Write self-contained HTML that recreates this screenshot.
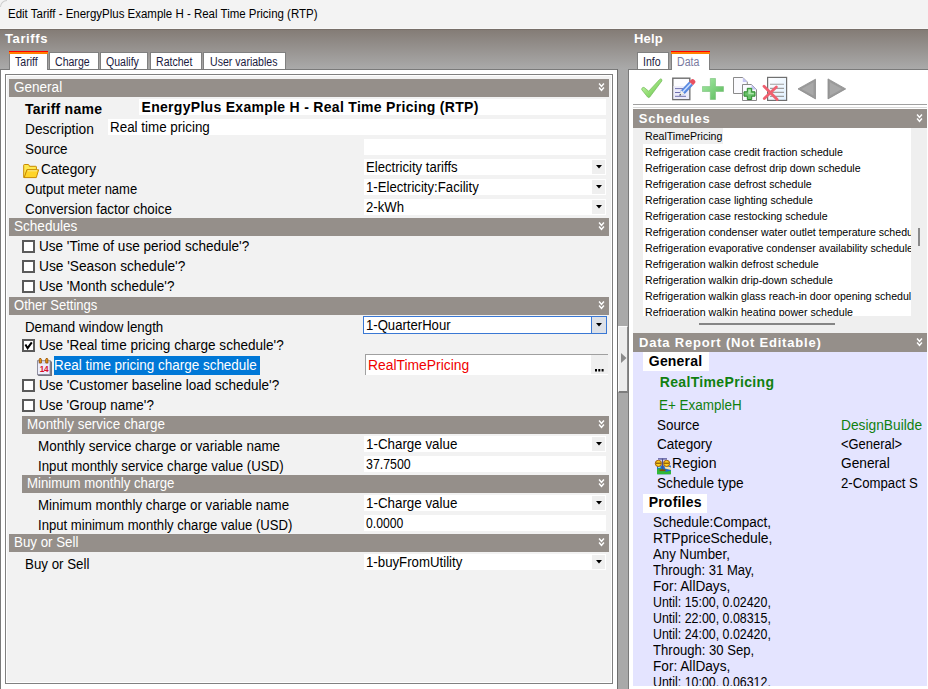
<!DOCTYPE html>
<html><head><meta charset="utf-8"><style>
html,body{margin:0;padding:0;}
body{width:928px;height:689px;overflow:hidden;position:relative;background:#fff;font-family:"Liberation Sans",sans-serif;}
.r{position:absolute;}
.t{position:absolute;white-space:nowrap;}
svg{display:block;}
</style></head><body>
<div class="r" style="left:0px;top:0px;width:928px;height:28px;background:#f3f3f3;"></div>
<div class="r" style="left:0;top:0;width:7px;height:7px;border-top-left-radius:8px;border-top:1px solid #cdcdcd;border-left:1px solid #cdcdcd;box-sizing:border-box"></div>
<div class="r" style="left:0px;top:28px;width:928px;height:1px;background:#f7f7f7;"></div>
<div class="t" style="left:7.5px;top:4px;line-height:20px;color:#000;font-size:12px;font-weight:normal;letter-spacing:0px;transform:scaleX(0.9570);transform-origin:0 0;">Edit Tariff - EnergyPlus Example H - Real Time Pricing (RTP)</div>
<div class="r" style="left:0px;top:29px;width:928px;height:1px;background:#776f69;"></div>
<div class="r" style="left:0px;top:30px;width:928px;height:39px;background:linear-gradient(#847c76,#aaaaaa);"></div>
<div class="t" style="left:5px;top:29px;line-height:20px;color:#fff;font-size:13px;font-weight:bold;letter-spacing:0.6px;">Tariffs</div>
<div class="t" style="left:634px;top:29px;line-height:20px;color:#fff;font-size:13px;font-weight:bold;letter-spacing:0.2px;">Help</div>
<div class="r" style="left:0px;top:69px;width:618px;height:620px;background:#fff;border-left:1px solid #7a7a7a;border-top:1px solid #7a7a7a;border-right:1px solid #7a7a7a;box-sizing:border-box"></div>
<div class="r" style="left:9px;top:51px;width:39px;height:19px;background:#fff;border-left:1px solid #808080;border-right:1px solid #808080;box-sizing:border-box"></div>
<div class="r" style="left:9px;top:51px;width:39px;height:1px;background:#ff0000;"></div>
<div class="r" style="left:9px;top:52px;width:39px;height:2px;background:#ff8000;"></div>
<div class="t" style="left:15px;top:52px;line-height:20px;color:#1a1a40;font-size:12px;font-weight:normal;letter-spacing:0px;transform:scaleX(0.8800);transform-origin:0 0;">Tariff</div>
<div class="r" style="left:49px;top:52px;width:50px;height:17px;background:#fff;border:1px solid #808080;border-bottom:none;box-sizing:border-box"></div>
<div class="t" style="left:55px;top:52px;line-height:20px;color:#1a1a40;font-size:12px;font-weight:normal;letter-spacing:0px;transform:scaleX(0.8800);transform-origin:0 0;">Charge</div>
<div class="r" style="left:100px;top:52px;width:48px;height:17px;background:#fff;border:1px solid #808080;border-bottom:none;box-sizing:border-box"></div>
<div class="t" style="left:105.5px;top:52px;line-height:20px;color:#1a1a40;font-size:12px;font-weight:normal;letter-spacing:0px;transform:scaleX(0.8800);transform-origin:0 0;">Qualify</div>
<div class="r" style="left:150px;top:52px;width:52px;height:17px;background:#fff;border:1px solid #808080;border-bottom:none;box-sizing:border-box"></div>
<div class="t" style="left:155.7px;top:52px;line-height:20px;color:#1a1a40;font-size:12px;font-weight:normal;letter-spacing:0px;transform:scaleX(0.8800);transform-origin:0 0;">Ratchet</div>
<div class="r" style="left:203px;top:52px;width:83px;height:17px;background:#fff;border:1px solid #808080;border-bottom:none;box-sizing:border-box"></div>
<div class="t" style="left:210px;top:52px;line-height:20px;color:#1a1a40;font-size:12px;font-weight:normal;letter-spacing:0px;transform:scaleX(0.8800);transform-origin:0 0;">User variables</div>
<div class="r" style="left:5px;top:74px;width:608px;height:610px;background:#f2f2f2;border:1px solid #808080;box-shadow:inset 1px 1px 0 #fff, inset -1px -1px 0 #fff;box-sizing:border-box"></div>
<div class="r" style="left:9px;top:79px;width:600px;height:18px;background:#958f8a;"></div>
<div class="t" style="left:14px;top:77px;line-height:20px;color:#fff;font-size:14px;font-weight:normal;letter-spacing:0px;transform:scaleX(0.9667);transform-origin:0 0;">General</div>
<div class="r" style="left:598px;top:83px;width:7px;height:9px"><svg width="7" height="9" viewBox="0 0 7 9"><path d="M1.1 0.6 L3.5 3.4 L5.9 0.6 M1.1 4.6 L3.5 7.4 L5.9 4.6" stroke="#fff" stroke-width="1.5" fill="none"/></svg></div>
<div class="t" style="left:25px;top:99px;line-height:20px;color:#000;font-size:14px;font-weight:bold;letter-spacing:0.25px;">Tariff name</div>
<div class="r" style="left:139px;top:99px;width:467px;height:16px;background:#fff;"></div>
<div class="t" style="left:141.5px;top:97px;line-height:20px;color:#000;font-size:14px;font-weight:bold;letter-spacing:0.3px;">EnergyPlus Example H - Real Time Pricing (RTP)</div>
<div class="t" style="left:25px;top:119px;line-height:20px;color:#000;font-size:14px;font-weight:normal;letter-spacing:0px;transform:scaleX(0.9824);transform-origin:0 0;">Description</div>
<div class="r" style="left:108px;top:119px;width:498px;height:16px;background:#fff;"></div>
<div class="t" style="left:110px;top:117px;line-height:20px;color:#000;font-size:14px;font-weight:normal;letter-spacing:0px;transform:scaleX(0.9573);transform-origin:0 0;">Real time pricing</div>
<div class="t" style="left:25px;top:139px;line-height:20px;color:#000;font-size:14px;font-weight:normal;letter-spacing:0px;transform:scaleX(0.9600);transform-origin:0 0;">Source</div>
<div class="r" style="left:364px;top:139px;width:242px;height:16px;background:#fff;"></div>
<div class="r" style="left:23px;top:164px;width:17px;height:15px"><svg width="17" height="15" viewBox="0 0 17 15"><path d="M0.7 13.5 V1.2 Q0.7 0.5 1.4 0.5 H5.2 Q5.8 0.5 6 1 L6.4 2.3 H12.8 Q13.4 2.3 13.4 2.9 V5.8 H3.9 L1.9 13.5 Z" fill="#ffe850" stroke="#c88a00" stroke-width="1"/><path d="M3.9 5.8 H15.6 L13.3 13.6 H1.2 Z" fill="#ffd428" stroke="#c88a00" stroke-width="1"/><path d="M4.6 6.8 H14.3" stroke="#fff8b0" stroke-width="0.8"/></svg></div>
<div class="t" style="left:41px;top:159px;line-height:20px;color:#000;font-size:14px;font-weight:normal;letter-spacing:0px;transform:scaleX(0.9696);transform-origin:0 0;">Category</div>
<div class="r" style="left:364px;top:159px;width:242px;height:16px;background:#fff;"></div>
<div class="r" style="left:592px;top:160px;width:13px;height:14px;background:#efefef;"></div>
<div class="r" style="left:596px;top:165px;width:6px;height:4px"><svg width="6" height="4" viewBox="0 0 6 4"><path d="M0 0 L6 0 L3 3.5 Z" fill="#000"/></svg></div>
<div class="t" style="left:366px;top:157px;line-height:20px;color:#000;font-size:14px;font-weight:normal;letter-spacing:0px;transform:scaleX(0.9375);transform-origin:0 0;">Electricity tariffs</div>
<div class="t" style="left:25px;top:179px;line-height:20px;color:#000;font-size:14px;font-weight:normal;letter-spacing:0px;transform:scaleX(0.9303);transform-origin:0 0;">Output meter name</div>
<div class="r" style="left:364px;top:179px;width:242px;height:16px;background:#fff;"></div>
<div class="r" style="left:592px;top:180px;width:13px;height:14px;background:#efefef;"></div>
<div class="r" style="left:596px;top:185px;width:6px;height:4px"><svg width="6" height="4" viewBox="0 0 6 4"><path d="M0 0 L6 0 L3 3.5 Z" fill="#000"/></svg></div>
<div class="t" style="left:366px;top:177px;line-height:20px;color:#000;font-size:14px;font-weight:normal;letter-spacing:0px;transform:scaleX(0.9412);transform-origin:0 0;">1-Electricity:Facility</div>
<div class="t" style="left:25px;top:199px;line-height:20px;color:#000;font-size:14px;font-weight:normal;letter-spacing:0px;transform:scaleX(0.9529);transform-origin:0 0;">Conversion factor choice</div>
<div class="r" style="left:364px;top:199px;width:242px;height:16px;background:#fff;"></div>
<div class="r" style="left:592px;top:200px;width:13px;height:14px;background:#efefef;"></div>
<div class="r" style="left:596px;top:205px;width:6px;height:4px"><svg width="6" height="4" viewBox="0 0 6 4"><path d="M0 0 L6 0 L3 3.5 Z" fill="#000"/></svg></div>
<div class="t" style="left:366px;top:197px;line-height:20px;color:#000;font-size:14px;font-weight:normal;letter-spacing:0px;transform:scaleX(0.9385);transform-origin:0 0;">2-kWh</div>
<div class="r" style="left:9px;top:218px;width:600px;height:18px;background:#958f8a;"></div>
<div class="t" style="left:14px;top:216px;line-height:20px;color:#fff;font-size:14px;font-weight:normal;letter-spacing:0px;transform:scaleX(0.9688);transform-origin:0 0;">Schedules</div>
<div class="r" style="left:598px;top:222px;width:7px;height:9px"><svg width="7" height="9" viewBox="0 0 7 9"><path d="M1.1 0.6 L3.5 3.4 L5.9 0.6 M1.1 4.6 L3.5 7.4 L5.9 4.6" stroke="#fff" stroke-width="1.5" fill="none"/></svg></div>
<div class="r" style="left:22px;top:240px;width:13px;height:13px;background:#fff;border:2px solid #5a5a5a;box-sizing:border-box"></div>
<div class="t" style="left:39px;top:236px;line-height:20px;color:#000;font-size:14px;font-weight:normal;letter-spacing:0px;transform:scaleX(0.9676);transform-origin:0 0;">Use 'Time of use period schedule'?</div>
<div class="r" style="left:22px;top:260px;width:13px;height:13px;background:#fff;border:2px solid #5a5a5a;box-sizing:border-box"></div>
<div class="t" style="left:39px;top:256px;line-height:20px;color:#000;font-size:14px;font-weight:normal;letter-spacing:0px;transform:scaleX(0.9797);transform-origin:0 0;">Use 'Season schedule'?</div>
<div class="r" style="left:22px;top:280px;width:13px;height:13px;background:#fff;border:2px solid #5a5a5a;box-sizing:border-box"></div>
<div class="t" style="left:39px;top:276px;line-height:20px;color:#000;font-size:14px;font-weight:normal;letter-spacing:0px;transform:scaleX(0.9619);transform-origin:0 0;">Use 'Month schedule'?</div>
<div class="r" style="left:9px;top:297px;width:600px;height:18px;background:#958f8a;"></div>
<div class="t" style="left:14px;top:295px;line-height:20px;color:#fff;font-size:14px;font-weight:normal;letter-spacing:0px;transform:scaleX(0.9318);transform-origin:0 0;">Other Settings</div>
<div class="r" style="left:598px;top:301px;width:7px;height:9px"><svg width="7" height="9" viewBox="0 0 7 9"><path d="M1.1 0.6 L3.5 3.4 L5.9 0.6 M1.1 4.6 L3.5 7.4 L5.9 4.6" stroke="#fff" stroke-width="1.5" fill="none"/></svg></div>
<div class="t" style="left:25px;top:317px;line-height:20px;color:#000;font-size:14px;font-weight:normal;letter-spacing:0px;transform:scaleX(0.9500);transform-origin:0 0;">Demand window length</div>
<div class="r" style="left:363px;top:316px;width:244px;height:18px;background:#fff;border:1px solid #3a78d4;box-sizing:border-box"></div>
<div class="r" style="left:591px;top:317px;width:15px;height:16px;background:#dde1e8;border-left:1px solid #3a78d4;box-sizing:border-box"></div>
<div class="r" style="left:596px;top:323px;width:6px;height:4px"><svg width="6" height="4" viewBox="0 0 6 4"><path d="M0 0 L6 0 L3 3.5 Z" fill="#000"/></svg></div>
<div class="t" style="left:366px;top:315px;line-height:20px;color:#000;font-size:14px;font-weight:normal;letter-spacing:0px;transform:scaleX(0.9371);transform-origin:0 0;">1-QuarterHour</div>
<div class="r" style="left:22px;top:339px;width:13px;height:13px;background:#fff;border:2px solid #5a5a5a;box-sizing:border-box"></div>
<div class="r" style="left:22px;top:339px;width:13px;height:13px"><svg width="13" height="13" viewBox="0 0 13 13"><path d="M3.4 5.6 L5.6 9.2 L9.8 3.3" stroke="#000" stroke-width="2" fill="none"/></svg></div>
<div class="t" style="left:39px;top:335px;line-height:20px;color:#000;font-size:14px;font-weight:normal;letter-spacing:0px;transform:scaleX(0.9681);transform-origin:0 0;">Use 'Real time pricing charge schedule'?</div>
<div class="r" style="left:36px;top:357px;width:17px;height:19px"><svg width="17" height="19" viewBox="0 0 17 19"><path d="M1 3.5 H14.5 L16 5 V19 H2.5 L1 17.5 Z" fill="#74747e"/><rect x="1.5" y="4" width="12.5" height="13.5" fill="#eeeefc" stroke="#8c8c9c" stroke-width="0.9"/><path d="M2 4.5 H13.5 V7 H2 Z" fill="#dcdcf0"/><path d="M3.3 6 Q2.6 1.5 4.2 1 Q5.8 0.8 5.4 6 Z" fill="#f09a18" stroke="#8a4800" stroke-width="0.8"/><path d="M9.8 6 Q9.1 1.5 10.7 1 Q12.3 0.8 11.9 6 Z" fill="#f09a18" stroke="#8a4800" stroke-width="0.8"/><text x="7.9" y="15.2" font-family="Liberation Sans" font-weight="bold" font-size="8.2" fill="#d8102a" text-anchor="middle" letter-spacing="-0.3">14</text></svg></div>
<div class="r" style="left:54px;top:356px;width:206px;height:19px;background:#0078d7;"></div>
<div class="t" style="left:54px;top:355px;line-height:20px;color:#fff;font-size:14px;font-weight:normal;letter-spacing:0px;transform:scaleX(0.9617);transform-origin:0 0;">Real time pricing charge schedule</div>
<div class="r" style="left:365px;top:354px;width:243px;height:21px;background:#fff;border-top:1px solid #a0a0a0;border-left:1px solid #a0a0a0;box-sizing:border-box"></div>
<div class="r" style="left:591px;top:355px;width:17px;height:19px;background:#efefef;"></div>
<div class="r" style="left:595px;top:369px;width:9px;height:3px"><svg width="9" height="3"><rect x="0" y="0" width="2" height="2.5" fill="#000"/><rect x="3.3" y="0" width="2" height="2.5" fill="#000"/><rect x="6.6" y="0" width="2" height="2.5" fill="#000"/></svg></div>
<div class="t" style="left:368px;top:355px;line-height:20px;color:#f00000;font-size:14px;font-weight:normal;letter-spacing:0px;transform:scaleX(0.9901);transform-origin:0 0;">RealTimePricing</div>
<div class="r" style="left:22px;top:379px;width:13px;height:13px;background:#fff;border:2px solid #5a5a5a;box-sizing:border-box"></div>
<div class="t" style="left:39px;top:375px;line-height:20px;color:#000;font-size:14px;font-weight:normal;letter-spacing:0px;transform:scaleX(0.9649);transform-origin:0 0;">Use 'Customer baseline load schedule'?</div>
<div class="r" style="left:22px;top:399px;width:13px;height:13px;background:#fff;border:2px solid #5a5a5a;box-sizing:border-box"></div>
<div class="t" style="left:39px;top:395px;line-height:20px;color:#000;font-size:14px;font-weight:normal;letter-spacing:0px;transform:scaleX(0.9593);transform-origin:0 0;">Use 'Group name'?</div>
<div class="r" style="left:22px;top:416px;width:587px;height:18px;background:#958f8a;"></div>
<div class="t" style="left:27px;top:414px;line-height:20px;color:#fff;font-size:14px;font-weight:normal;letter-spacing:0px;transform:scaleX(0.9580);transform-origin:0 0;">Monthly service charge</div>
<div class="r" style="left:598px;top:420px;width:7px;height:9px"><svg width="7" height="9" viewBox="0 0 7 9"><path d="M1.1 0.6 L3.5 3.4 L5.9 0.6 M1.1 4.6 L3.5 7.4 L5.9 4.6" stroke="#fff" stroke-width="1.5" fill="none"/></svg></div>
<div class="t" style="left:38px;top:436px;line-height:20px;color:#000;font-size:14px;font-weight:normal;letter-spacing:0px;transform:scaleX(0.9602);transform-origin:0 0;">Monthly service charge or variable name</div>
<div class="r" style="left:364px;top:436px;width:242px;height:16px;background:#fff;"></div>
<div class="r" style="left:592px;top:437px;width:13px;height:14px;background:#efefef;"></div>
<div class="r" style="left:596px;top:442px;width:6px;height:4px"><svg width="6" height="4" viewBox="0 0 6 4"><path d="M0 0 L6 0 L3 3.5 Z" fill="#000"/></svg></div>
<div class="t" style="left:366px;top:434px;line-height:20px;color:#000;font-size:14px;font-weight:normal;letter-spacing:0px;transform:scaleX(0.9543);transform-origin:0 0;">1-Charge value</div>
<div class="t" style="left:38px;top:456px;line-height:20px;color:#000;font-size:14px;font-weight:normal;letter-spacing:0px;transform:scaleX(0.9479);transform-origin:0 0;">Input monthly service charge value (USD)</div>
<div class="r" style="left:364px;top:456px;width:242px;height:16px;background:#fff;"></div>
<div class="t" style="left:366px;top:454px;line-height:20px;color:#000;font-size:14px;font-weight:normal;letter-spacing:0px;transform:scaleX(0.8837);transform-origin:0 0;">37.7500</div>
<div class="r" style="left:22px;top:475px;width:587px;height:18px;background:#958f8a;"></div>
<div class="t" style="left:27px;top:473px;line-height:20px;color:#fff;font-size:14px;font-weight:normal;letter-spacing:0px;transform:scaleX(0.9419);transform-origin:0 0;">Minimum monthly charge</div>
<div class="r" style="left:598px;top:479px;width:7px;height:9px"><svg width="7" height="9" viewBox="0 0 7 9"><path d="M1.1 0.6 L3.5 3.4 L5.9 0.6 M1.1 4.6 L3.5 7.4 L5.9 4.6" stroke="#fff" stroke-width="1.5" fill="none"/></svg></div>
<div class="t" style="left:38px;top:495px;line-height:20px;color:#000;font-size:14px;font-weight:normal;letter-spacing:0px;transform:scaleX(0.9490);transform-origin:0 0;">Minimum monthly charge or variable name</div>
<div class="r" style="left:364px;top:495px;width:242px;height:16px;background:#fff;"></div>
<div class="r" style="left:592px;top:496px;width:13px;height:14px;background:#efefef;"></div>
<div class="r" style="left:596px;top:501px;width:6px;height:4px"><svg width="6" height="4" viewBox="0 0 6 4"><path d="M0 0 L6 0 L3 3.5 Z" fill="#000"/></svg></div>
<div class="t" style="left:366px;top:493px;line-height:20px;color:#000;font-size:14px;font-weight:normal;letter-spacing:0px;transform:scaleX(0.9543);transform-origin:0 0;">1-Charge value</div>
<div class="t" style="left:38px;top:515px;line-height:20px;color:#000;font-size:14px;font-weight:normal;letter-spacing:0px;transform:scaleX(0.9370);transform-origin:0 0;">Input minimum monthly charge value (USD)</div>
<div class="r" style="left:364px;top:515px;width:242px;height:16px;background:#fff;"></div>
<div class="t" style="left:366px;top:513px;line-height:20px;color:#000;font-size:14px;font-weight:normal;letter-spacing:0px;transform:scaleX(0.8714);transform-origin:0 0;">0.0000</div>
<div class="r" style="left:9px;top:534px;width:600px;height:18px;background:#958f8a;"></div>
<div class="t" style="left:14px;top:532px;line-height:20px;color:#fff;font-size:14px;font-weight:normal;letter-spacing:0px;transform:scaleX(0.9515);transform-origin:0 0;">Buy or Sell</div>
<div class="r" style="left:598px;top:538px;width:7px;height:9px"><svg width="7" height="9" viewBox="0 0 7 9"><path d="M1.1 0.6 L3.5 3.4 L5.9 0.6 M1.1 4.6 L3.5 7.4 L5.9 4.6" stroke="#fff" stroke-width="1.5" fill="none"/></svg></div>
<div class="t" style="left:25px;top:554px;line-height:20px;color:#000;font-size:14px;font-weight:normal;letter-spacing:0px;transform:scaleX(0.9515);transform-origin:0 0;">Buy or Sell</div>
<div class="r" style="left:364px;top:554px;width:242px;height:16px;background:#fff;"></div>
<div class="r" style="left:592px;top:555px;width:13px;height:14px;background:#efefef;"></div>
<div class="r" style="left:596px;top:560px;width:6px;height:4px"><svg width="6" height="4" viewBox="0 0 6 4"><path d="M0 0 L6 0 L3 3.5 Z" fill="#000"/></svg></div>
<div class="t" style="left:366px;top:552px;line-height:20px;color:#000;font-size:14px;font-weight:normal;letter-spacing:0px;transform:scaleX(0.9455);transform-origin:0 0;">1-buyFromUtility</div>
<div class="r" style="left:617px;top:69px;width:1px;height:620px;background:#6e6e6e;"></div>
<div class="r" style="left:618px;top:69px;width:10px;height:620px;background:#a9a9a9;"></div>
<div class="r" style="left:618px;top:326px;width:10px;height:67px;background:#ececec;border-top:1px solid #fafafa;border-left:1px solid #fafafa;border-bottom:2px solid #7c7c7c;border-right:1px solid #8a8a8a;box-sizing:border-box"></div>
<div class="r" style="left:621px;top:353px;width:6px;height:10px"><svg width="6" height="10"><path d="M0 0 L5.5 5 L0 10 Z" fill="#8a8a8a"/></svg></div>
<div class="r" style="left:628px;top:69px;width:300px;height:620px;background:#fff;border-left:1px solid #7a7a7a;border-top:1px solid #7a7a7a;box-sizing:border-box"></div>
<div class="r" style="left:637px;top:52px;width:32px;height:17px;background:#fff;border:1px solid #808080;border-bottom:none;box-sizing:border-box"></div>
<div class="t" style="left:643px;top:52px;line-height:20px;color:#1a1a40;font-size:12px;font-weight:normal;letter-spacing:0px;transform:scaleX(0.8800);transform-origin:0 0;">Info</div>
<div class="r" style="left:671px;top:51px;width:39px;height:19px;background:#fff;border-left:1px solid #808080;border-right:1px solid #808080;box-sizing:border-box"></div>
<div class="r" style="left:671px;top:51px;width:39px;height:1px;background:#ff0000;"></div>
<div class="r" style="left:671px;top:52px;width:39px;height:2px;background:#ff8000;"></div>
<div class="t" style="left:677px;top:52px;line-height:20px;color:#7a7aa0;font-size:12px;font-weight:normal;letter-spacing:0px;transform:scaleX(0.8800);transform-origin:0 0;">Data</div>
<div class="r" style="left:640px;top:77px;width:24px;height:22px"><svg width="24" height="22" viewBox="0 0 24 22">
    <defs><linearGradient id="gck" x1="0" y1="0" x2="1" y2="1"><stop offset="0" stop-color="#d0fcb8"/><stop offset="0.5" stop-color="#98e078"/><stop offset="1" stop-color="#5cb848"/></linearGradient></defs>
    <path d="M2 11.2 Q1.2 12 2 13 L7.6 20 Q8.7 21.2 9.8 20 L21.8 4 Q22.5 2.6 21.2 2 Q20.2 1.6 19.5 2.6 L8.7 14.2 L4.3 10.6 Q3.1 9.8 2 11.2 Z" fill="url(#gck)" stroke="#70b858" stroke-width="0.7"/></svg></div>
<div class="r" style="left:672px;top:77px;width:24px;height:24px"><svg width="24" height="24" viewBox="0 0 24 24">
    <rect x="0.8" y="1.2" width="17" height="21.4" fill="#fcfcff" stroke="#6e6e6e" stroke-width="1.4"/>
    <rect x="1.5" y="9" width="15.6" height="13" fill="#ececfa"/>
    <path d="M3 11.6 H14 M3 15.5 H14 M3 19.3 H14" stroke="#7070b0" stroke-width="1"/>
    <g transform="translate(7.4,18.7) rotate(-46.3)">
    <path d="M0 0 L5 -2.6 H17 V2.6 H5 Z" fill="#5888e0"/>
    <path d="M5 -1 H17 V0.6 H5 Z" fill="#c8dcff"/>
    <path d="M0 0 L5 -2.6 V2.6 Z" fill="#f4f0e8"/>
    <path d="M0 0 L1.8 -0.9 V0.9 Z" fill="#303030"/>
    <path d="M17 -2.6 H19.6 Q21.8 -2.6 21.8 0 Q21.8 2.6 19.6 2.6 H17 Z" fill="#e85060"/>
    </g></svg></div>
<div class="r" style="left:702px;top:78px;width:22px;height:22px"><svg width="22" height="22" viewBox="0 0 22 22">
    <defs><linearGradient id="gpl" x1="0" y1="0" x2="1" y2="1"><stop offset="0" stop-color="#a8eca8"/><stop offset="1" stop-color="#58b858"/></linearGradient></defs>
    <path d="M8.3 0.5 H13.5 V8.6 H21.5 V13.5 H13.5 V21.5 H8.3 V13.5 H0.3 V8.6 H8.3 Z" fill="url(#gpl)" stroke="#78c078" stroke-width="0.6"/></svg></div>
<div class="r" style="left:732px;top:76px;width:26px;height:26px"><svg width="26" height="26" viewBox="0 0 26 26">
    <path d="M1.5 1.5 H10.8 L15.3 6 V17.5 H1.5 Z" fill="#fafafe" stroke="#8a8a8a"/><path d="M10.8 1.5 L15.3 6 H10.8 Z" fill="#c4c4f4"/>
    <path d="M10.5 8.5 H19.5 L24.5 13.5 V24.5 H10.5 Z" fill="#fafafe" stroke="#8a8a8a"/><path d="M19.5 8.5 L24.5 13.5 H19.5 Z" fill="#c4c4f4"/>
    <path d="M15.3 12.3 H19.7 V15.8 H23 V20.2 H19.7 V23.5 H15.3 V20.2 H12 V15.8 H15.3 Z" fill="#68c068" stroke="#2a8a2a" stroke-width="1"/>
    <path d="M16.3 13.5 H18.7 V17 H21.8 V18.3 H16.3 Z" fill="#b0e8b0"/></svg></div>
<div class="r" style="left:762px;top:76px;width:26px;height:26px"><svg width="26" height="26" viewBox="0 0 26 26">
    <defs><linearGradient id="gdl" x1="0" y1="0" x2="1" y2="1"><stop offset="0" stop-color="#ffffff"/><stop offset="1" stop-color="#e0f0ff"/></linearGradient></defs>
    <rect x="5.6" y="1.4" width="19" height="23" fill="url(#gdl)" stroke="#707070" stroke-width="1.2"/>
    <path d="M8 8.3 H22 M8 12.4 H22 M8 16.4 H22 M8 20.4 H22" stroke="#a0a0a0" stroke-width="1.1"/>
    <path d="M2 10.2 L15.2 23.6 M14.4 11 L2.3 22.6" stroke="#f06070" stroke-width="2.8" stroke-linecap="round"/></svg></div>
<div class="r" style="left:797px;top:78px;width:20px;height:22px"><svg width="20" height="22" viewBox="0 0 20 22">
    <path d="M1 10.9 L18.5 1.2 V20.9 Z" fill="#9a9a9a" stroke="#8c8c8c" stroke-width="0.8" stroke-linejoin="round"/><path d="M4.5 10.9 L16.5 4.2 V17.6 Z" fill="#a8a8a8"/></svg></div>
<div class="r" style="left:827px;top:78px;width:20px;height:22px"><svg width="20" height="22" viewBox="0 0 20 22">
    <path d="M1 0.9 L18.7 10.9 L1 20.9 Z" fill="#9a9a9a" stroke="#8c8c8c" stroke-width="0.8" stroke-linejoin="round"/><path d="M3 4.2 L15 10.9 L3 17.6 Z" fill="#a8a8a8"/></svg></div>
<div class="r" style="left:633px;top:104px;width:294px;height:1px;background:#a0a0a0;"></div>
<div class="r" style="left:633px;top:107px;width:294px;height:1px;background:#d8d8d8;"></div>
<div class="r" style="left:633px;top:109px;width:294px;height:19px;background:#958f8a;"></div>
<div class="t" style="left:638.8px;top:109px;line-height:20px;color:#fff;font-size:13px;font-weight:bold;letter-spacing:0.75px;">Schedules</div>
<div class="r" style="left:916px;top:114px;width:7px;height:9px"><svg width="7" height="9" viewBox="0 0 7 9"><path d="M1.1 0.6 L3.5 3.4 L5.9 0.6 M1.1 4.6 L3.5 7.4 L5.9 4.6" stroke="#fff" stroke-width="1.5" fill="none"/></svg></div>
<div class="r" style="left:633px;top:128px;width:294px;height:205px;background:#efefef;"></div>
<div class="r" style="left:643px;top:128px;width:268px;height:188px;background:#fff;"></div>
<div class="r" style="left:643px;top:128px;width:80px;height:16px;background:#f0f0f0;"></div>
<div class="r" style="left:643px;top:128px;width:268px;height:188px;overflow:hidden">
<div class="t" style="left:2px;top:-2px;line-height:20px;color:#000;font-size:10.6px;font-weight:normal;letter-spacing:0px;">RealTimePricing</div>
<div class="t" style="left:2px;top:14px;line-height:20px;color:#000;font-size:10.6px;font-weight:normal;letter-spacing:0px;">Refrigeration case credit fraction schedule</div>
<div class="t" style="left:2px;top:30px;line-height:20px;color:#000;font-size:10.6px;font-weight:normal;letter-spacing:0px;">Refrigeration case defrost drip down schedule</div>
<div class="t" style="left:2px;top:46px;line-height:20px;color:#000;font-size:10.6px;font-weight:normal;letter-spacing:0px;">Refrigeration case defrost schedule</div>
<div class="t" style="left:2px;top:62px;line-height:20px;color:#000;font-size:10.6px;font-weight:normal;letter-spacing:0px;">Refrigeration case lighting schedule</div>
<div class="t" style="left:2px;top:78px;line-height:20px;color:#000;font-size:10.6px;font-weight:normal;letter-spacing:0px;">Refrigeration case restocking schedule</div>
<div class="t" style="left:2px;top:94px;line-height:20px;color:#000;font-size:10.6px;font-weight:normal;letter-spacing:0px;">Refrigeration condenser water outlet temperature schedule</div>
<div class="t" style="left:2px;top:110px;line-height:20px;color:#000;font-size:10.6px;font-weight:normal;letter-spacing:0px;">Refrigeration evaporative condenser availability schedule</div>
<div class="t" style="left:2px;top:126px;line-height:20px;color:#000;font-size:10.6px;font-weight:normal;letter-spacing:0px;">Refrigeration walkin defrost schedule</div>
<div class="t" style="left:2px;top:142px;line-height:20px;color:#000;font-size:10.6px;font-weight:normal;letter-spacing:0px;">Refrigeration walkin drip-down schedule</div>
<div class="t" style="left:2px;top:158px;line-height:20px;color:#000;font-size:10.6px;font-weight:normal;letter-spacing:0px;">Refrigeration walkin glass reach-in door opening schedule</div>
<div class="t" style="left:2px;top:174px;line-height:20px;color:#000;font-size:10.6px;font-weight:normal;letter-spacing:0px;">Refrigeration walkin heating power schedule</div>
</div>
<div class="r" style="left:918px;top:228px;width:2px;height:18px;background:#8a8a8a;"></div>
<div class="r" style="left:699px;top:323px;width:136px;height:2px;background:#858585;"></div>
<div class="r" style="left:633px;top:333px;width:294px;height:19px;background:#958f8a;"></div>
<div class="t" style="left:639px;top:333px;line-height:20px;color:#fff;font-size:13px;font-weight:bold;letter-spacing:0.8px;">Data Report (Not Editable)</div>
<div class="r" style="left:916px;top:338px;width:7px;height:9px"><svg width="7" height="9" viewBox="0 0 7 9"><path d="M1.1 0.6 L3.5 3.4 L5.9 0.6 M1.1 4.6 L3.5 7.4 L5.9 4.6" stroke="#fff" stroke-width="1.5" fill="none"/></svg></div>
<div class="r" style="left:633px;top:352px;width:294px;height:334px;background:#e4e4ff;"></div>
<div class="r" style="left:643px;top:352px;width:66px;height:19px;background:#fff;"></div>
<div class="t" style="left:648.8px;top:351px;line-height:20px;color:#000;font-size:14px;font-weight:bold;letter-spacing:0.2px;">General</div>
<div class="t" style="left:659.7px;top:372px;line-height:20px;color:#108010;font-size:14px;font-weight:bold;letter-spacing:0.35px;">RealTimePricing</div>
<div class="t" style="left:659px;top:395px;line-height:20px;color:#108010;font-size:14px;font-weight:normal;letter-spacing:0px;transform:scaleX(0.9619);transform-origin:0 0;">E+ ExampleH</div>
<div class="t" style="left:657px;top:415px;line-height:20px;color:#000;font-size:14px;font-weight:normal;letter-spacing:0px;transform:scaleX(0.9581);transform-origin:0 0;">Source</div>
<div class="t" style="left:841px;top:415px;line-height:20px;color:#108010;font-size:14px;font-weight:normal;letter-spacing:0px;transform:scaleX(0.9827);transform-origin:0 0;">DesignBuilde</div>
<div class="t" style="left:657px;top:434px;line-height:20px;color:#000;font-size:14px;font-weight:normal;letter-spacing:0px;transform:scaleX(0.9696);transform-origin:0 0;">Category</div>
<div class="t" style="left:841px;top:434px;line-height:20px;color:#000;font-size:14px;font-weight:normal;letter-spacing:0px;transform:scaleX(0.9231);transform-origin:0 0;">&lt;General&gt;</div>
<div class="t" style="left:672px;top:453px;line-height:20px;color:#000;font-size:14px;font-weight:normal;letter-spacing:0px;transform:scaleX(1.0023);transform-origin:0 0;">Region</div>
<div class="t" style="left:841px;top:453px;line-height:20px;color:#000;font-size:14px;font-weight:normal;letter-spacing:0px;transform:scaleX(0.9792);transform-origin:0 0;">General</div>
<div class="t" style="left:657px;top:473px;line-height:20px;color:#000;font-size:14px;font-weight:normal;letter-spacing:0px;transform:scaleX(0.9770);transform-origin:0 0;">Schedule type</div>
<div class="t" style="left:841px;top:473px;line-height:20px;color:#000;font-size:14px;font-weight:normal;letter-spacing:0px;transform:scaleX(0.9412);transform-origin:0 0;">2-Compact S</div>
<div class="r" style="left:654px;top:457px;width:18px;height:18px"><svg width="18" height="18" viewBox="0 0 18 18"><rect x="3" y="8.5" width="14" height="8.8" rx="0.8" fill="#1a6ed0"/><path d="M3 12.5 Q6 10 8.5 13 Q11 16 17 13.5 V17.3 H3 Z" fill="#30b838"/><path d="M10.5 9 Q14 8.6 17 10.5 V13 Q14 12 11 11.5 Z" fill="#f4e0b0"/><path d="M4 9.5 Q5.5 8.8 7 9.8 L6 11 Q5 10.5 4 11 Z" fill="#a0e8ff"/><path d="M4 1.9 H13" stroke="#5a5aa0" stroke-width="1.4"/><path d="M8.5 1.5 V12.5" stroke="#50508a" stroke-width="1.3"/><circle cx="4.4" cy="6.4" r="3.1" fill="#ffd020" stroke="#9a5000" stroke-width="0.9"/><circle cx="12.6" cy="6.4" r="3.1" fill="#ffd020" stroke="#9a5000" stroke-width="0.9"/><path d="M1.8 6.2 H7 M10 6.2 H15.2" stroke="#6a3a00" stroke-width="1"/><path d="M5.5 13.2 H11.5" stroke="#8a5000" stroke-width="1.8"/></svg></div>
<div class="r" style="left:643px;top:494px;width:64px;height:19px;background:#fff;"></div>
<div class="t" style="left:648.7px;top:492px;line-height:20px;color:#000;font-size:14px;font-weight:bold;letter-spacing:0.2px;">Profiles</div>
<div class="r" style="left:633px;top:352px;width:294px;height:334px;overflow:hidden">
<div class="t" style="left:20px;top:160px;line-height:20px;color:#000;font-size:14px;font-weight:normal;letter-spacing:0px;transform:scaleX(0.9667);transform-origin:0 0;">Schedule:Compact,</div>
<div class="t" style="left:20px;top:176px;line-height:20px;color:#000;font-size:14px;font-weight:normal;letter-spacing:0px;transform:scaleX(0.9915);transform-origin:0 0;">RTPpriceSchedule,</div>
<div class="t" style="left:20px;top:192px;line-height:20px;color:#000;font-size:14px;font-weight:normal;letter-spacing:0px;transform:scaleX(0.9500);transform-origin:0 0;">Any Number,</div>
<div class="t" style="left:20px;top:208px;line-height:20px;color:#000;font-size:14px;font-weight:normal;letter-spacing:0px;transform:scaleX(0.9315);transform-origin:0 0;">Through: 31 May,</div>
<div class="t" style="left:20px;top:224px;line-height:20px;color:#000;font-size:14px;font-weight:normal;letter-spacing:0px;transform:scaleX(0.9740);transform-origin:0 0;">For: AllDays,</div>
<div class="t" style="left:20px;top:240px;line-height:20px;color:#000;font-size:14px;font-weight:normal;letter-spacing:0px;transform:scaleX(0.8855);transform-origin:0 0;">Until: 15:00, 0.02420,</div>
<div class="t" style="left:20px;top:256px;line-height:20px;color:#000;font-size:14px;font-weight:normal;letter-spacing:0px;transform:scaleX(0.8855);transform-origin:0 0;">Until: 22:00, 0.08315,</div>
<div class="t" style="left:20px;top:272px;line-height:20px;color:#000;font-size:14px;font-weight:normal;letter-spacing:0px;transform:scaleX(0.8855);transform-origin:0 0;">Until: 24:00, 0.02420,</div>
<div class="t" style="left:20px;top:288px;line-height:20px;color:#000;font-size:14px;font-weight:normal;letter-spacing:0px;transform:scaleX(0.9346);transform-origin:0 0;">Through: 30 Sep,</div>
<div class="t" style="left:20px;top:304px;line-height:20px;color:#000;font-size:14px;font-weight:normal;letter-spacing:0px;transform:scaleX(0.9740);transform-origin:0 0;">For: AllDays,</div>
<div class="t" style="left:20px;top:320px;line-height:20px;color:#000;font-size:14px;font-weight:normal;letter-spacing:0px;transform:scaleX(0.8855);transform-origin:0 0;">Until: 10:00, 0.06312,</div>
</div>
</body></html>
